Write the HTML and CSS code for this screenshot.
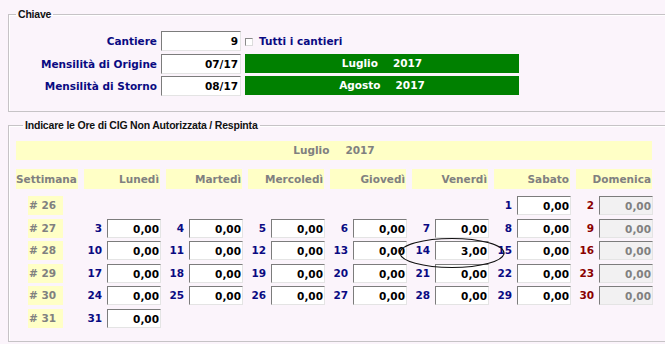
FILE: index.html
```html
<!DOCTYPE html>
<html lang="it">
<head>
<meta charset="utf-8">
<title>CIG</title>
<link rel="stylesheet" href="styles.css">
</head>
<body>
<div class="page">
  <fieldset class="box box-key">
    <legend>Chiave</legend>
    <div class="key-grid">
      <div class="lbl">Cantiere</div>
      <div class="inp">9</div>
      <div class="chk-wrap"><span class="chk"></span><span class="lbl">Tutti i cantieri</span></div>

      <div class="lbl">Mensilità di Origine</div>
      <div class="inp">07/17</div>
      <div class="green"><span>Luglio</span><span>2017</span></div>

      <div class="lbl">Mensilità di Storno</div>
      <div class="inp">08/17</div>
      <div class="green"><span>Agosto</span><span>2017</span></div>
    </div>
  </fieldset>

  <fieldset class="box box-cig">
    <legend>Indicare le Ore di CIG Non Autorizzata / Respinta</legend>
    <div class="title"><span>Luglio</span><span>2017</span></div>

    <div class="cal head">
      <div class="hcell first">Settimana</div>
      <div class="hcell">Lunedì</div>
      <div class="hcell">Martedì</div>
      <div class="hcell">Mercoledì</div>
      <div class="hcell">Giovedì</div>
      <div class="hcell">Venerdì</div>
      <div class="hcell">Sabato</div>
      <div class="hcell">Domenica</div>
    </div>

    <div class="cal rows">
      <div class="wk"># 26</div>
      <div></div><div></div><div></div><div></div><div></div>
      <div class="day"><span class="num">1</span><span class="val">0,00</span></div>
      <div class="day sun"><span class="num">2</span><span class="val">0,00</span></div>

      <div class="wk"># 27</div>
      <div class="day"><span class="num">3</span><span class="val">0,00</span></div>
      <div class="day"><span class="num">4</span><span class="val">0,00</span></div>
      <div class="day"><span class="num">5</span><span class="val">0,00</span></div>
      <div class="day"><span class="num">6</span><span class="val">0,00</span></div>
      <div class="day"><span class="num">7</span><span class="val">0,00</span></div>
      <div class="day"><span class="num">8</span><span class="val">0,00</span></div>
      <div class="day sun"><span class="num">9</span><span class="val">0,00</span></div>

      <div class="wk"># 28</div>
      <div class="day"><span class="num">10</span><span class="val">0,00</span></div>
      <div class="day"><span class="num">11</span><span class="val">0,00</span></div>
      <div class="day"><span class="num">12</span><span class="val">0,00</span></div>
      <div class="day"><span class="num">13</span><span class="val">0,00</span></div>
      <div class="day"><span class="num">14</span><span class="val">3,00</span></div>
      <div class="day"><span class="num">15</span><span class="val">0,00</span></div>
      <div class="day sun"><span class="num">16</span><span class="val">0,00</span></div>

      <div class="wk"># 29</div>
      <div class="day"><span class="num">17</span><span class="val">0,00</span></div>
      <div class="day"><span class="num">18</span><span class="val">0,00</span></div>
      <div class="day"><span class="num">19</span><span class="val">0,00</span></div>
      <div class="day"><span class="num">20</span><span class="val">0,00</span></div>
      <div class="day"><span class="num">21</span><span class="val">0,00</span></div>
      <div class="day"><span class="num">22</span><span class="val">0,00</span></div>
      <div class="day sun"><span class="num">23</span><span class="val">0,00</span></div>

      <div class="wk"># 30</div>
      <div class="day"><span class="num">24</span><span class="val">0,00</span></div>
      <div class="day"><span class="num">25</span><span class="val">0,00</span></div>
      <div class="day"><span class="num">26</span><span class="val">0,00</span></div>
      <div class="day"><span class="num">27</span><span class="val">0,00</span></div>
      <div class="day"><span class="num">28</span><span class="val">0,00</span></div>
      <div class="day"><span class="num">29</span><span class="val">0,00</span></div>
      <div class="day sun"><span class="num">30</span><span class="val">0,00</span></div>

      <div class="wk"># 31</div>
      <div class="day"><span class="num">31</span><span class="val">0,00</span></div>
    </div>
  </fieldset>

  <svg class="mark" width="107" height="32" viewBox="0 0 107 32">
    <ellipse cx="53" cy="16" rx="52" ry="14.5" fill="none" stroke="#111" stroke-width="1.1"/>
  </svg>
</div>
</body>
</html>
```
FILE: styles.css
```css
html, body {
  margin: 0;
  padding: 0;
  background: #fbf4fb;
  overflow: hidden;
}

body {
  font-family: "DejaVu Sans", Verdana, sans-serif;
  font-size: 10.5px;
  font-weight: bold;
  width: 665px;
  height: 344px;
}

.page {
  position: relative;
  width: 665px;
  height: 344px;
  padding-top: 8px;
  box-sizing: border-box;
}

.box {
  margin: 0 0 0 8px;
  width: 680px;
  box-sizing: border-box;
  border: 1px solid #c6c3c6;
  box-shadow: inset 1px 1px 0 #ffffff;
  padding: 0;
  min-width: 0;
}

.box legend {
  font-family: "Liberation Sans", Arial, sans-serif;
  font-size: 10.5px;
  line-height: 13px;
  font-weight: bold;
  color: #111;
  padding: 0 2px;
  margin-left: 7px;
  letter-spacing: -0.2px;
}

/* ---------- Chiave ---------- */
.box-key {
  padding: 10px 0 15px 0;
}

.key-grid {
  display: grid;
  grid-template-columns: 148px 80px 274px;
  grid-auto-rows: 20px;
  column-gap: 4px;
  row-gap: 2.5px;
}

.lbl {
  color: #0a0a82;
  text-align: right;
  line-height: 20px;
  white-space: nowrap;
}

.inp {
  background: #fff;
  border: 1px solid;
  border-color: #7c7c7c #e4e4e4 #e4e4e4 #7c7c7c;
  box-sizing: border-box;
  text-align: right;
  color: #000;
  padding-right: 2px;
  line-height: 18px;
}

.chk-wrap {
  display: flex;
  align-items: center;
  gap: 6px;
}

.chk-wrap .lbl {
  text-align: left;
}

.chk {
  width: 8px;
  height: 8px;
  box-sizing: border-box;
  background: #fff;
  border: 1px solid;
  border-color: #8a8a8a #dcdcdc #dcdcdc #8a8a8a;
  margin-top: 1px;
}

.green {
  background: #008000;
  color: #fff;
  display: flex;
  justify-content: center;
  gap: 15px;
  line-height: 19px;
  height: 19px;
}

/* ---------- CIG ---------- */
.box-cig {
  margin-top: 7px;
  padding: 9px 0 12px 7px;
}

.title {
  width: 636px;
  height: 19px;
  line-height: 19px;
  background: #ffffc6;
  color: #808080;
  display: flex;
  justify-content: center;
  gap: 16px;
}

.cal {
  display: grid;
  grid-template-columns: 62px repeat(7, 76px);
  column-gap: 6px;
}

.head {
  margin-top: 9px;
  height: 20px;
}

.hcell {
  background: #ffffc6;
  color: #808080;
  text-align: right;
  padding-right: 1px;
  line-height: 20px;
  white-space: nowrap;
}

.hcell.first {
  text-align: left;
  padding: 0;
}

.rows {
  margin-top: 7px;
  grid-auto-rows: 20px;
  row-gap: 2.6px;
}

.wk {
  background: #ffffc6;
  color: #808080;
  width: 35px;
  margin-left: 12px;
  padding-left: 1px;
  box-sizing: border-box;
  line-height: 19px;
  height: 19px;
  white-space: pre;
}

.day {
  display: flex;
  white-space: nowrap;
}

.num {
  width: 18px;
  flex: none;
  text-align: right;
  margin-right: 5px;
  color: #0a0a82;
  line-height: 18px;
}

.val {
  flex: none;
  width: 54px;
  height: 19px;
  box-sizing: border-box;
  background: #fff;
  border: 1px solid;
  border-color: #7c7c7c #e4e4e4 #e4e4e4 #7c7c7c;
  text-align: right;
  padding-right: 1px;
  line-height: 18px;
  color: #000;
}

.sun .num {
  color: #8a0000;
}

.sun .val {
  background: #f2f1f2;
  color: #808080;
}

.mark {
  position: absolute;
  left: 399px;
  top: 237px;
}
```
